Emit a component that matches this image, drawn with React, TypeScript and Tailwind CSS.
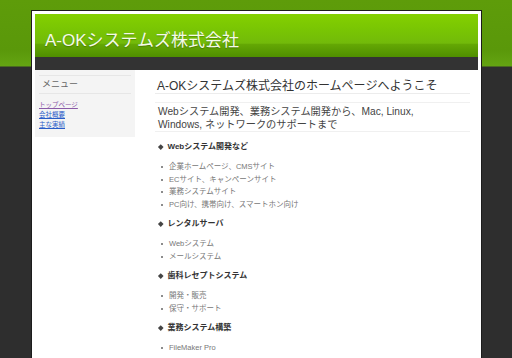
import React from "react";

const font = { fontFamily: '"Liberation Sans", "Noto Sans CJK JP", Arial, sans-serif' };

const sections: { title: string; items: string[] }[] = [
  { title: "Webシステム開発など", items: ["企業ホームページ、CMSサイト", "ECサイト、キャンペーンサイト", "業務システムサイト", "PC向け、携帯向け、スマートホン向け"] },
  { title: "レンタルサーバ", items: ["Webシステム", "メールシステム"] },
  { title: "歯科レセプトシステム", items: ["開発・販売", "保守・サポート"] },
  { title: "業務システム構築", items: ["FileMaker Pro"] },
];

export default function App() {
  return (
    <div
      className="h-[358px] w-[512px] overflow-hidden bg-[linear-gradient(to_bottom,#5e9c0a_0px,#5a980a_50px,#64a412_66px,#2e2e2e_67px,#2e2e2e_100%)]"
      style={font}
    >
      <div className="ml-[31px] mt-[10px] w-[451px] border border-[#1c1c1c] bg-white px-[3px] pt-[3px] pb-[40px]">
        <div className="h-[43px] bg-[linear-gradient(to_bottom,#84d000_0%,#78c404_40%,#72ba0a_68%,#64a804_70%,#4f8e00_100%)] pl-[10px] pt-[19px]">
          <div className="text-[17px] leading-[16px] text-[#f4fae8] [text-shadow:0_1px_1px_rgba(0,0,0,0.25)]">A-OKシステムズ株式会社</div>
        </div>
        <div className="h-[13px] bg-[#333333]" />
        <div className="flex">
          <div className="w-[100px] self-start bg-[#f4f4f4] px-[4px] pt-[5px] pb-[7px]">
            <div className="h-[19px] border-y border-[#e6e6e6] pl-[3px] text-[9px] leading-[17px] text-[#666]">メニュー</div>
            <div className="mt-[6px] flex flex-col text-[6.5px] leading-[10px]">
              <a className="text-[#8a5aa8] underline">トップページ</a>
              <a className="text-[#2a5cc8] underline">会社概要</a>
              <a className="text-[#2a5cc8] underline">主な実績</a>
            </div>
          </div>
          <div className="ml-[20px] w-[315px]">
            <div className="border-b border-[#ececec] pl-[2px] pt-[9px] text-[12px] leading-[14px] text-[#333]">
              A-OKシステムズ株式会社のホームページへようこそ
            </div>
            <div className="mt-[8px] border-y border-[#f0f0f0] pl-[3px] pt-[2px] text-[10.2px] leading-[13px] text-[#444]">
              Webシステム開発、業務システム開発から、Mac, Linux,
              <br />
              Windows, ネットワークのサポートまで
            </div>
            <div className="mt-[9px] flex flex-col">
              {sections.map((s, i) => (
                <div key={i} className={i > 0 ? "mt-[7px]" : ""}>
                  <div className="flex items-center pl-[4px] text-[8px] font-bold leading-[12px] text-[#333]">
                    <span className="mr-[5px] inline-block h-[3.5px] w-[3.5px] rotate-45 bg-[#444]" />
                    {s.title}
                  </div>
                  <ul className="mt-[8px] flex flex-col text-[7.5px] leading-[12.5px] text-[#777]">
                    {s.items.map((it, j) => (
                      <li key={j} className="flex items-center pl-[6px]">
                        <span className="mr-[6px] inline-block h-[2px] w-[2px] rounded-full bg-[#666]" />
                        {it}
                      </li>
                    ))}
                  </ul>
                </div>
              ))}
            </div>
          </div>
        </div>
      </div>
    </div>
  );
}
